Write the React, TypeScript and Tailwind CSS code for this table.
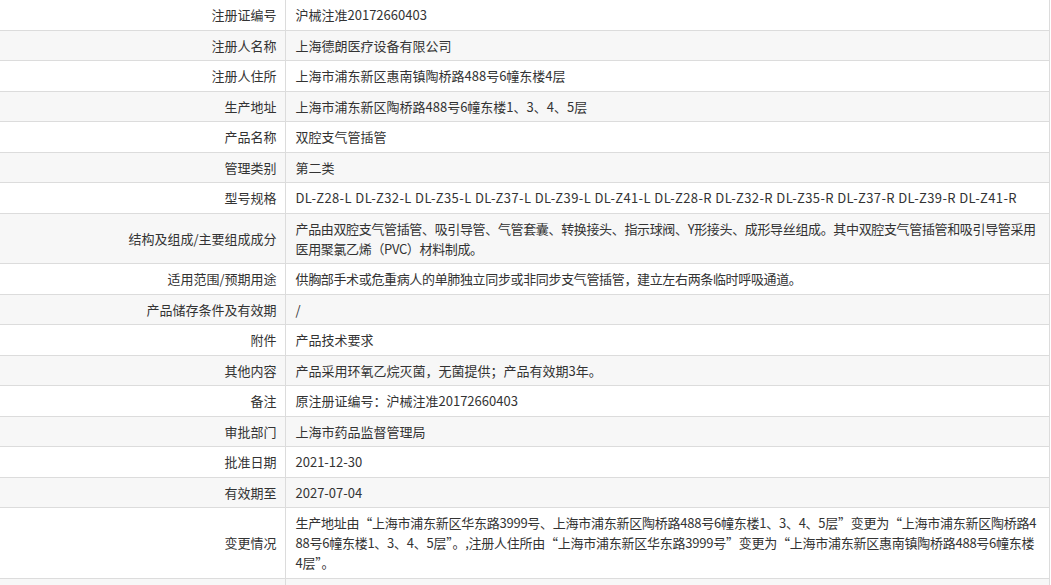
const rows: { label: string; lines: string[]; fit?: string }[] = [
  { label: "注册证编号", lines: ["沪械注准20172660403"] },
  { label: "注册人名称", lines: ["上海德朗医疗设备有限公司"] },
  { label: "注册人住所", lines: ["上海市浦东新区惠南镇陶桥路488号6幢东楼4层"] },
  { label: "生产地址", lines: ["上海市浦东新区陶桥路488号6幢东楼1、3、4、5层"] },
  { label: "产品名称", lines: ["双腔支气管插管"] },
  { label: "管理类别", lines: ["第二类"] },
  {
    label: "型号规格",
    fit: "tracking-[0.4px]",
    lines: [
      "DL-Z28-L DL-Z32-L DL-Z35-L DL-Z37-L DL-Z39-L DL-Z41-L DL-Z28-R DL-Z32-R DL-Z35-R DL-Z37-R DL-Z39-R DL-Z41-R",
    ],
  },
  {
    label: "结构及组成/主要组成成分",
    fit: "tracking-[-0.35px]",
    lines: [
      "产品由双腔支气管插管、吸引导管、气管套囊、转换接头、指示球阀、Y形接头、成形导丝组成。其中双腔支气管插管和吸引导管采用",
      "医用聚氯乙烯（PVC）材料制成。",
    ],
  },
  {
    label: "适用范围/预期用途",
    fit: "tracking-[-0.35px]",
    lines: ["供胸部手术或危重病人的单肺独立同步或非同步支气管插管，建立左右两条临时呼吸通道。"],
  },
  { label: "产品储存条件及有效期", lines: ["/"] },
  { label: "附件", lines: ["产品技术要求"] },
  { label: "其他内容", lines: ["产品采用环氧乙烷灭菌，无菌提供；产品有效期3年。"] },
  { label: "备注", lines: ["原注册证编号：沪械注准20172660403"] },
  { label: "审批部门", lines: ["上海市药品监督管理局"] },
  { label: "批准日期", lines: ["2021-12-30"] },
  { label: "有效期至", lines: ["2027-07-04"] },
  {
    label: "变更情况",
    fit: "tracking-[-0.25px]",
    lines: [
      "生产地址由“上海市浦东新区华东路3999号、上海市浦东新区陶桥路488号6幢东楼1、3、4、5层”变更为“上海市浦东新区陶桥路4",
      "88号6幢东楼1、3、4、5层”。,注册人住所由“上海市浦东新区华东路3999号”变更为“上海市浦东新区惠南镇陶桥路488号6幢东楼",
      "4层”。",
    ],
  },
  { label: "", lines: [""] },
];

export default function App() {
  return (
    <main className="h-[585px] w-[1051px] overflow-hidden bg-white font-['Noto_Sans_CJK_SC','Microsoft_YaHei',sans-serif] text-[13px] leading-[20px] text-[#333]">
      <table className="-mt-px w-[1050px] table-fixed border-collapse">
        <colgroup>
          <col className="w-[285px]" />
          <col />
        </colgroup>
        <tbody>
          {rows.map((r, i) => (
            <tr className={i % 2 === 1 ? "bg-[#f7f7f7]" : "bg-white"} key={i}>
              <td className="border-y border-r border-[#dcdcdc] pt-[5px] pr-[8px] pb-[4.5px] text-right align-middle whitespace-nowrap">
                {r.label}
              </td>
              <td
                className={`overflow-hidden border border-[#dcdcdc] pt-[5px] pl-[10px] pb-[4.5px] align-middle whitespace-nowrap ${
                  r.fit ?? ""
                }`}
              >
                {r.lines.map((l, j) => (
                  <div key={j}>{l || "\u00a0"}</div>
                ))}
              </td>
            </tr>
          ))}
        </tbody>
      </table>
    </main>
  );
}
